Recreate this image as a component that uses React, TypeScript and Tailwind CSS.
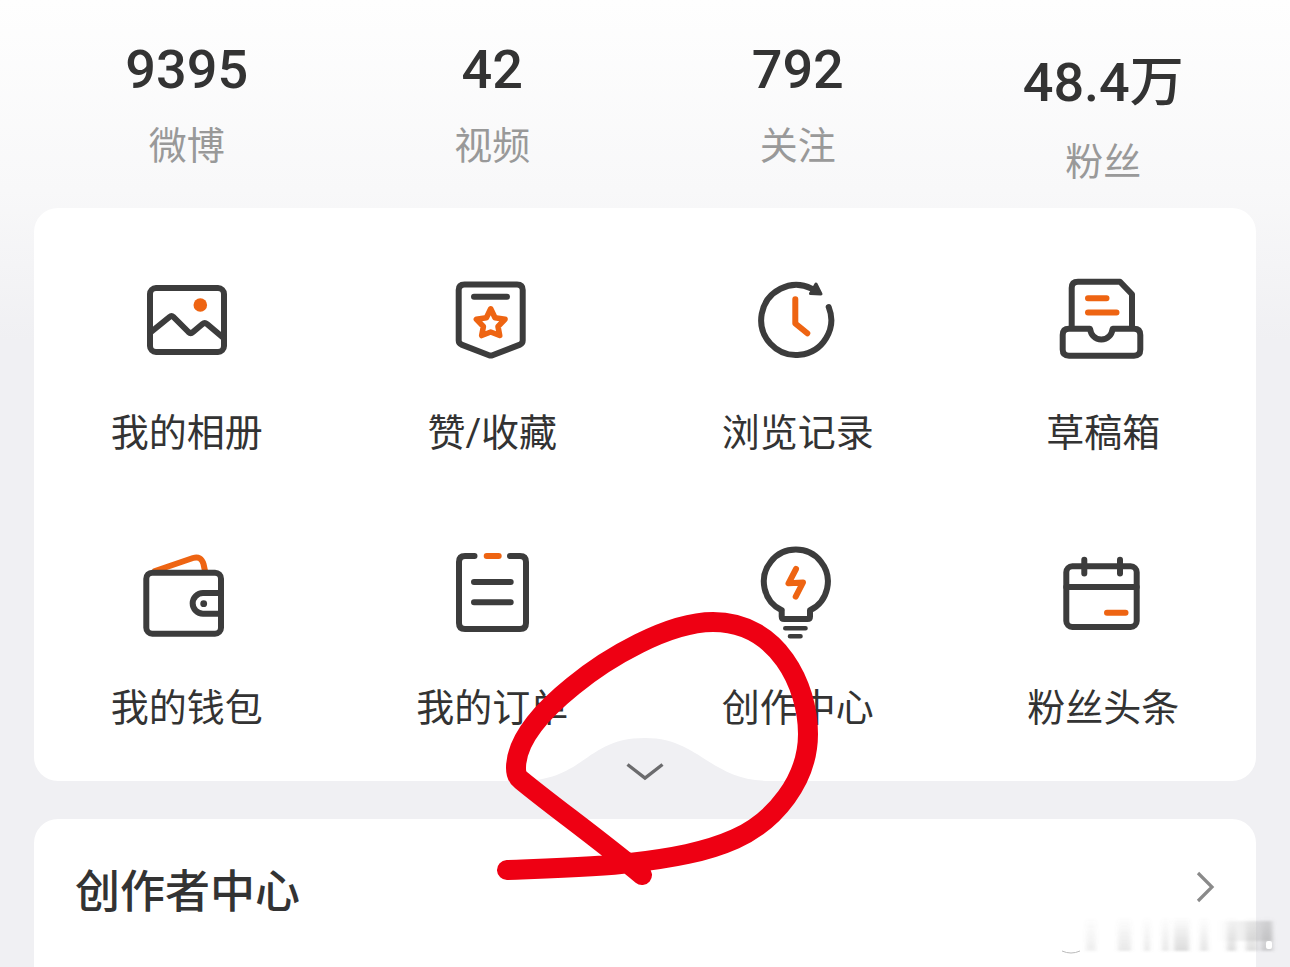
import type { ReactNode } from 'react'

const DARK = '#3c3c3c'
const ORANGE = '#ee6412'

const stats = [
  { value: '9395', label: '微博' },
  { value: '42', label: '视频' },
  { value: '792', label: '关注' },
  { value: '48.4万', label: '粉丝' },
]

interface IconProps {
  children: ReactNode
}

function Icon({ children }: IconProps) {
  return (
    <svg
      viewBox="0 0 100 100"
      className="w-[100px] h-[100px]"
      fill="none"
      stroke={DARK}
      strokeWidth="6"
      strokeLinecap="round"
      strokeLinejoin="round"
      aria-hidden="true"
    >
      {children}
    </svg>
  )
}

function AlbumIcon() {
  return (
    <Icon>
      <rect x="13" y="18" width="74" height="64" rx="6" />
      <path d="M14 62L32.5 47Q34.5 45.4 36.5 47L51.5 62Q53.7 64 56 62L65.5 54Q67.7 52.2 70 54L86 67.5" />
      <circle cx="63.3" cy="35" r="6.8" fill={ORANGE} stroke="none" />
    </Icon>
  )
}

function FavoriteIcon() {
  return (
    <Icon>
      <path d="M22.5 14.5H75Q80.7 14.5 80.7 20V70.5Q80.7 73.2 78 74.6L50.5 85.2Q48.7 85.9 47 85.2L19.5 74.6Q16.7 73.2 16.7 70.5V20Q16.7 14.5 22.5 14.5Z" />
      <path d="M32 26.7H65" />
      <path
        stroke={ORANGE}
        strokeWidth="5.6"
        d="M48.7 38.8L53 47.8L63 49.3L56 56.5L57.7 65.5L48.7 62L39.7 65.5L41.4 56.5L34.4 49.3L44.4 47.8Z"
      />
    </Icon>
  )
}

function HistoryIcon() {
  return (
    <Icon>
      <path d="M80.7 37A35 35 0 1 1 63.7 18.6" />
      <path d="M68 14L73 24L62.5 23.5Z" fill={DARK} strokeWidth="3" />
      <path d="M47.3 29.3V53.5L59.3 63.3" stroke={ORANGE} />
    </Icon>
  )
}

function DraftIcon() {
  return (
    <Icon>
      <path d="M18.7 58V18Q18.7 11.7 25 11.7H67L79 24.3V58" />
      <path d="M16 58.7H37C38 65 42 69.5 48.3 69.5C54.6 69.5 58.7 65 59.7 58.7H81Q87.3 58.7 87.3 65V79.5Q87.3 85.7 81 85.7H16Q9.7 85.7 9.7 79.5V65Q9.7 58.7 16 58.7Z" />
      <path d="M35 28.2H53.5M35 42.5H63.5" stroke={ORANGE} />
    </Icon>
  )
}

function WalletIcon() {
  return (
    <Icon>
      <path d="M18 26L56 13Q64 10.5 66.5 19L68 26" stroke={ORANGE} />
      <rect x="9.3" y="27.7" width="74.7" height="61" rx="6" />
      <path d="M84 48H66A10.3 10.3 0 0 0 66 68.7H84" />
      <circle cx="66.7" cy="58.7" r="3.4" fill={DARK} stroke="none" />
    </Icon>
  )
}

function OrderIcon() {
  return (
    <Icon>
      <path d="M32.5 11H23Q17 11 17 17V78Q17 84 23 84H78Q84 84 84 78V17Q84 11 78 11H68" />
      <path d="M32 37H68.7M32 57.3H68.7" />
      <path d="M44.7 11H56.7" stroke={ORANGE} />
    </Icon>
  )
}

function CreatorIcon() {
  return (
    <Icon>
      <path d="M33.7 65.3A32 32 0 1 1 62 65.3V71.5Q62 74 59.5 74H36.2Q33.7 74 33.7 71.5V65.3" />
      <path d="M37.3 83.3H57.5M42 91.3H52.5" strokeWidth="4.6" />
      <path d="M48 24L40.5 38.3L55 37.5L47.7 51.7" stroke={ORANGE} />
    </Icon>
  )
}

function HeadlineIcon() {
  return (
    <Icon>
      <rect x="13.3" y="21.3" width="70.4" height="60.7" rx="6" />
      <path d="M13.3 42H83.7M31.3 14.8V28.6M67 14.8V28.6" />
      <path d="M54 67.7H72.5" stroke={ORANGE} />
    </Icon>
  )
}

const entries = [
  { label: '我的相册', icon: <AlbumIcon /> },
  { label: '赞/收藏', icon: <FavoriteIcon /> },
  { label: '浏览记录', icon: <HistoryIcon /> },
  { label: '草稿箱', icon: <DraftIcon /> },
  { label: '我的钱包', icon: <WalletIcon /> },
  { label: '我的订单', icon: <OrderIcon /> },
  { label: '创作中心', icon: <CreatorIcon /> },
  { label: '粉丝头条', icon: <HeadlineIcon /> },
]

function ExpandButton() {
  return (
    <button
      type="button"
      aria-label="展开"
      className="absolute bottom-0 left-1/2 -translate-x-1/2 w-[250px] h-11"
    >
      <svg viewBox="0 0 250 44" className="w-full h-full" fill="none" aria-hidden="true">
        <path d="M0 44C65 44 65 1 125 1C180 1 190 44 250 44Z" fill="#f0f0f3" />
        <path d="M107.5 27.5L125 41L142.5 27.5" stroke="#6b6b6d" strokeWidth="3.4" />
      </svg>
    </button>
  )
}

// Hand-drawn marker loop around the expand button
function MarkerLoop() {
  return (
    <svg
      viewBox="480 590 360 310"
      className="absolute top-[382px] left-1/2 -ml-[165px] z-10 w-[360px] h-[310px] pointer-events-none"
      fill="none"
      stroke="#ee0013"
      strokeWidth="20"
      strokeLinecap="round"
      strokeLinejoin="round"
      aria-hidden="true"
    >
      <path d="M507 870C560 868 600 867 630 863C672 858 706 852 735 839C775 821 808 780 808 734C808 686 778 622 713 622C668 622 607 658 573 686C542 711 516 740 516 768C516 774 517 777 521 780C555 808 595 836 642 875" />
    </svg>
  )
}

function Watermark() {
  const bars = [
    { x: 28, w: 10, o: 0.1 },
    { x: 60, w: 13, o: 0.14 },
    { x: 86, w: 6, o: 0.13 },
    { x: 104, w: 7, o: 0.14 },
    { x: 116, w: 15, o: 0.22 },
    { x: 142, w: 8, o: 0.16 },
    { x: 169, w: 9, o: 0.2 },
    { x: 188, w: 12, o: 0.2 },
    { x: 203, w: 12, o: 0.26 },
  ]
  return (
    <svg
      viewBox="0 0 220 42"
      className="absolute right-2 bottom-3 w-[220px] h-[42px] pointer-events-none"
      aria-hidden="true"
    >
      <defs>
        <linearGradient id="fade" x1="0" y1="0" x2="0" y2="1">
          <stop offset="0" stopColor="#777" stopOpacity="0" />
          <stop offset="1" stopColor="#777" />
        </linearGradient>
        <linearGradient id="tail" x1="0" y1="0" x2="1" y2="0">
          <stop offset="0" stopColor="#999" stopOpacity="0" />
          <stop offset="1" stopColor="#999" stopOpacity="0.35" />
        </linearGradient>
        <filter id="soft">
          <feGaussianBlur stdDeviation="2 1" />
        </filter>
      </defs>
      <g filter="url(#soft)">
        {bars.map((bar) => (
          <rect key={bar.x} x={bar.x - 4} y="4" width={bar.w} height="34" fill="url(#fade)" opacity={bar.o * 1.2} />
        ))}
        <rect x="156" y="8" width="54" height="20" fill="url(#tail)" />
      </g>
      <path d="M0 38Q9 42 18 38" fill="none" stroke="#bbb" strokeWidth="1" />
      <rect x="204" y="28" width="6" height="8" rx="2" fill="#fff" />
    </svg>
  )
}

export default function App() {
  return (
    <div className="relative min-h-screen flex flex-col px-[34px] bg-[#f0f0f3] bg-[linear-gradient(#fefefe_0px,#f8f8f9_190px,#f0f0f3_340px)] font-[Roboto,'Noto_Sans_CJK_SC',sans-serif] text-[#333333]">
      <div className="grid grid-cols-4 items-start h-[208px] pt-[38px]">
        {stats.map((stat) => (
          <a key={stat.label} href="#" className="flex flex-col items-center gap-[17px]">
            <span className="text-[54px] leading-[normal] font-medium">{stat.value}</span>
            <span className="text-[38px] leading-[56px] text-[#999999]">{stat.label}</span>
          </a>
        ))}
      </div>

      <section className="relative bg-white rounded-[24px] pt-[62px] pb-[45px]">
        <div className="grid grid-cols-4 gap-y-[84px]">
          {entries.map((entry) => (
            <button key={entry.label} type="button" className="flex flex-col items-center gap-[35px]">
              {entry.icon}
              <span className="text-[38px] leading-[56px]">{entry.label}</span>
            </button>
          ))}
        </div>
        <ExpandButton />
        <MarkerLoop />
      </section>

      <section className="flex-1 mt-[38px] bg-white rounded-t-[24px]">
        <a href="#" className="flex items-center justify-between px-[41px] pt-[46px] pb-9">
          <h2 className="text-[45px] leading-[56px] font-medium">创作者中心</h2>
          <svg viewBox="0 0 20 36" className="w-5 h-9 mb-3" fill="none" stroke="#8a8a8a" strokeWidth="3.2" aria-hidden="true">
            <path d="M3 4L17 18L3 32" />
          </svg>
        </a>
      </section>
      <Watermark />
    </div>
  )
}
